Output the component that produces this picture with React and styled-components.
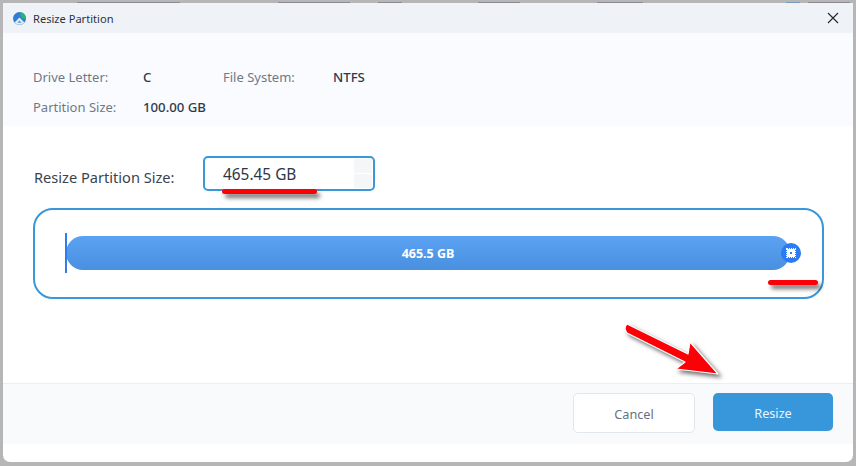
import React from "react";
import styled, { createGlobalStyle } from "styled-components";

const GlobalStyle = createGlobalStyle`
  html, body {
    margin: 0;
    padding: 0;
    height: 100%;
    overflow: hidden;
    background: #b6b6b6;
    font-family: "Noto Sans", "Open Sans", sans-serif;
  }
  * {
    box-sizing: border-box;
  }
`;

const Page = styled.div`
  position: relative;
  width: 856px;
  height: 466px;
  padding: 3px 3px 4px 3px;
  /* what's left of the app behind the dialog, cut off at the top edge */
  background:
    linear-gradient(90deg,
      transparent 77px, #8a8c95 77px, #8a8c95 180px, transparent 180px,
      transparent 278px, #8a8c95 278px, #8a8c95 350px, transparent 350px,
      transparent 378px, #8a8c95 378px, #8a8c95 402px, transparent 402px,
      transparent 478px, #8a8c95 478px, #8a8c95 520px, transparent 520px,
      transparent 597px, #8a8c95 597px, #8a8c95 643px, transparent 643px,
      transparent 786px, #7b98bd 786px, #7b98bd 800px, transparent 800px,
      transparent 808px, #8f8a92 808px, #8f8a92 850px, transparent 850px
    ) 0 2px / 100% 1px no-repeat,
    #b6b6b6;
`;

const Dialog = styled.div`
  width: 850px;
  height: 459px;
  display: flex;
  flex-direction: column;
  background: #ffffff;
  border-radius: 0 0 7px 7px;
  overflow: hidden;
`;

const TitleBar = styled.header`
  height: 30px;
  flex: none;
  display: flex;
  align-items: center;
  padding: 0 13px 0 10px;
  background: #eff3f8;
`;

const TitleText = styled.span`
  margin-left: 7px;
  flex: 1;
  font-size: 11.1px;
  color: #2b3442;
`;

const CloseButton = styled.button`
  width: 14px;
  height: 14px;
  padding: 0;
  border: 0;
  background: none;
  display: flex;
`;

const InfoSection = styled.section`
  height: 93px;
  flex: none;
  padding: 29px 0 0 30px;
  display: grid;
  grid-template-columns: 110px 80px 110px auto;
  grid-auto-rows: 30px;
  align-items: center;
  justify-content: start;
  background: #fafbfe;
  font-size: 13px;
`;

const InfoLabel = styled.span`
  color: #6f7986;
`;

const InfoValue = styled.span`
  color: #2d3a4d;
  font-size: 13.2px;
  font-weight: 500;
`;

const Body = styled.section`
  flex: 1;
  padding: 30px 29px 0 30px;
`;

const SizeRow = styled.div`
  height: 35px;
  display: flex;
  align-items: center;
`;

const SizeLabel = styled.label`
  width: 170px;
  padding: 7px 0 0 1px;
  font-size: 14.6px;
  color: #3a4350;
`;

const SizeInput = styled.div`
  position: relative;
  width: 172px;
  height: 35px;
  padding: 1px 0 0 18px;
  display: flex;
  align-items: center;
  border: 2px solid #3a97da;
  border-radius: 5px;
  font-size: 15.4px;
  color: #2c3646;
`;

const Spinner = styled.div`
  position: absolute;
  top: 1px;
  right: 1px;
  bottom: 1px;
  width: 18px;
  display: flex;
  flex-direction: column;
  gap: 1px;
`;

const SpinnerCell = styled.span`
  flex: 1;
  background: #f5f6f8;
`;

const SliderPanel = styled.div`
  position: relative;
  height: 91px;
  margin-top: 17px;
  padding: 0 32px 2px 31px;
  display: flex;
  align-items: center;
  border: 2px solid #3a97da;
  border-radius: 20px;
`;

const Track = styled.div`
  position: relative;
  flex: 1;
  height: 34px;
  padding-top: 2px;
  display: flex;
  align-items: center;
  justify-content: center;
  border-radius: 17px;
  background: linear-gradient(180deg, #5ba3f2 0%, #4a8fe0 100%);
  font-size: 12.5px;
  font-weight: 700;
  color: #ffffff;
`;

const StartTick = styled.span`
  position: absolute;
  left: -1px;
  top: -3px;
  width: 2px;
  height: 40px;
  background: #2f7bf0;
`;

const Thumb = styled.span`
  position: absolute;
  right: -11px;
  top: 7px;
  width: 20px;
  height: 20px;
  display: flex;
  align-items: center;
  justify-content: center;
  border-radius: 50%;
  background: #2b7cf4;
`;

const ThumbMark = styled.span`
  width: 10px;
  height: 10px;
  display: flex;
  align-items: center;
  justify-content: center;
  border: 1px dotted #ffffff;
  background: #ffffff;
  background-clip: padding-box;
`;

const ThumbDot = styled.span`
  width: 2px;
  height: 2px;
  background: #2b7cf4;
`;

const Footer = styled.footer`
  height: 61px;
  flex: none;
  margin-bottom: 18px;
  padding: 9px 20px 0 0;
  display: flex;
  justify-content: flex-end;
  align-items: flex-start;
  gap: 18px;
  background: #f9fafc;
  border-top: 1px solid #eceef2;
`;

const Button = styled.button`
  height: ${(p) => (p.$primary ? "38px" : "40px")};
  width: ${(p) => (p.$primary ? "120px" : "122px")};
  padding: 2px 0 0;
  border-radius: 5px;
  border: ${(p) => (p.$primary ? "0" : "1px solid #e3e6ea")};
  background: ${(p) => (p.$primary ? "#3897db" : "#ffffff")};
  color: ${(p) => (p.$primary ? "#eaf4fc" : "#67717f")};
  font-family: inherit;
  font-size: 12.7px;
`;

const Underline = styled.span`
  position: absolute;
  left: ${(p) => p.$left}px;
  top: ${(p) => p.$top}px;
  width: ${(p) => p.$width}px;
  height: 5px;
  border-radius: 3px;
  background: #fb0007;
  box-shadow: 3px 4px 4px rgba(0, 0, 0, 0.55);
`;

const ArrowOverlay = styled.svg`
  position: absolute;
  left: 615px;
  top: 315px;
  overflow: visible;
  filter: drop-shadow(3px 3px 2px rgba(0, 0, 0, 0.55));
`;

const AppLogo = () => (
  <svg width="13" height="13" viewBox="0 0 13 13">
    <circle cx="6.5" cy="6.5" r="6.5" fill="#2f7fd0" />
    <path d="M8 0.3 A6.5 6.5 0 0 1 13 6.5 L13 8 L9 6 L7.4 3 Z" fill="#27b56f" />
    <path d="M1.6 10.6 L6.5 5.6 L11.4 10.6 A6.5 6.5 0 0 1 1.6 10.6 Z" fill="#e3ecf5" />
    <path d="M4.2 10.8 L6.5 8.4 L8.8 10.8 Z" fill="#5f9ad6" />
  </svg>
);

const CloseIcon = () => (
  <svg width="14" height="14" viewBox="0 0 14 14">
    <path d="M2 2 L12 12 M12 2 L2 12" stroke="#1f2630" strokeWidth="1.1" fill="none" />
  </svg>
);

export default function App() {
  return (
    <>
      <GlobalStyle />
      <Page>
        <Dialog>
          <TitleBar>
            <AppLogo />
            <TitleText>Resize Partition</TitleText>
            <CloseButton aria-label="Close">
              <CloseIcon />
            </CloseButton>
          </TitleBar>

          <InfoSection>
            <InfoLabel>Drive Letter:</InfoLabel>
            <InfoValue>C</InfoValue>
            <InfoLabel>File System:</InfoLabel>
            <InfoValue>NTFS</InfoValue>
            <InfoLabel>Partition Size:</InfoLabel>
            <InfoValue>100.00 GB</InfoValue>
          </InfoSection>

          <Body>
            <SizeRow>
              <SizeLabel>Resize Partition Size:</SizeLabel>
              <SizeInput>
                465.45 GB
                <Spinner>
                  <SpinnerCell />
                  <SpinnerCell />
                </Spinner>
              </SizeInput>
            </SizeRow>
            <SliderPanel>
              <Track>
                <StartTick />
                465.5 GB
                <Thumb>
                  <ThumbMark>
                    <ThumbDot />
                  </ThumbMark>
                </Thumb>
              </Track>
            </SliderPanel>
          </Body>

          <Footer>
            <Button>Cancel</Button>
            <Button $primary>Resize</Button>
          </Footer>
        </Dialog>

        {/* red annotations drawn on top of the screenshot */}
        <Underline $left={222} $top={189} $width={95} />
        <Underline $left={768} $top={280} $width={50} />
        <ArrowOverlay width="110" height="70" viewBox="0 0 110 70">
          <path
            d="M12 9 L73 39 L75 27 L103 59 L61 54 L70 47 L12 18 Q8 13 12 9 Z"
            fill="#fb0007"
            stroke="#ffffff"
            strokeWidth="1.2"
            strokeLinejoin="round"
          />
        </ArrowOverlay>
      </Page>
    </>
  );
}
